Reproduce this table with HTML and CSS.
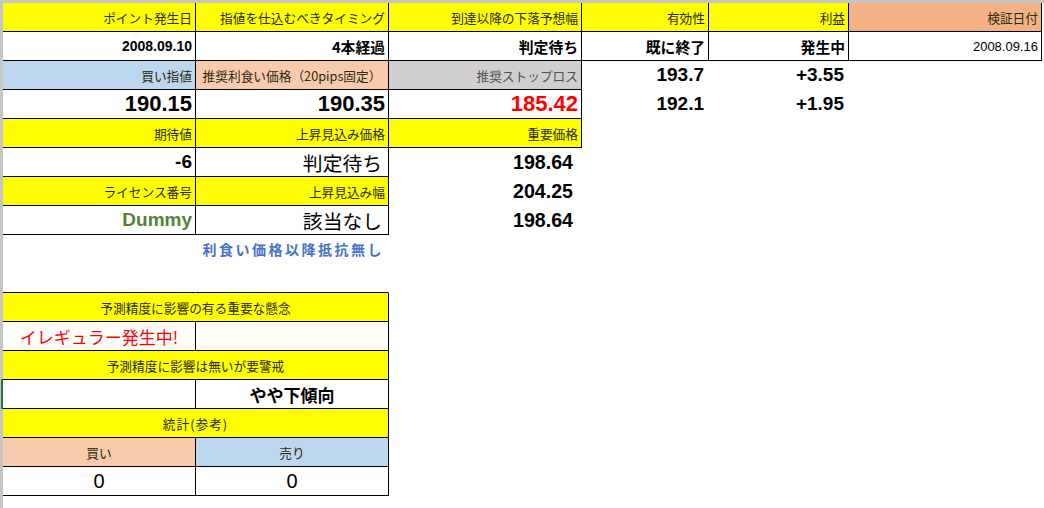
FILE: index.html
```html
<!DOCTYPE html>
<html lang="ja">
<head>
<meta charset="utf-8">
<link rel="stylesheet" href="styles.css">
</head>
<body>
<div class="sheet">
  <div class="row">
    <div class="c b y hd">ポイント発生日</div>
    <div class="c b y hd">指値を仕込むべきタイミング</div>
    <div class="c b y hd">到達以降の下落予想幅</div>
    <div class="c b y hd">有効性</div>
    <div class="c b y hd">利益</div>
    <div class="c b s hd">検証日付</div>
  </div>
  <div class="row">
    <div class="c b num14">2008.09.10</div>
    <div class="c b bj">4本経過</div>
    <div class="c b bj">判定待ち</div>
    <div class="c b bj">既に終了</div>
    <div class="c b bj">発生中</div>
    <div class="c b date">2008.09.16</div>
  </div>
  <div class="row">
    <div class="c b blue hd">買い指値</div>
    <div class="c b peach hd mid">推奨利食い価格（20pips固定）</div>
    <div class="c b gray hd gtext">推奨ストップロス</div>
    <div class="c num19 pr">193.7</div>
    <div class="c num19 pr">+3.55</div>
  </div>
  <div class="row">
    <div class="c b num22">190.15</div>
    <div class="c b num22">190.35</div>
    <div class="c b num22 red">185.42</div>
    <div class="c num19 pr">192.1</div>
    <div class="c num19 pr">+1.95</div>
  </div>
  <div class="row">
    <div class="c b y hd">期待値</div>
    <div class="c b y hd">上昇見込み価格</div>
    <div class="c b y hd">重要価格</div>
  </div>
  <div class="row">
    <div class="c b num19">-6</div>
    <div class="c b big">判定待ち</div>
    <div class="c num20 pr8">198.64</div>
  </div>
  <div class="row">
    <div class="c b y hd">ライセンス番号</div>
    <div class="c b y hd">上昇見込み幅</div>
    <div class="c num20 pr8">204.25</div>
  </div>
  <div class="row">
    <div class="c b num19 green">Dummy</div>
    <div class="c b big">該当なし</div>
    <div class="c num20 pr8">198.64</div>
  </div>
  <div class="row">
    <div class="c"></div>
    <div class="c note">利食い価格以降抵抗無し</div>
  </div>
  <div class="row">
    <div class="c bb"></div>
    <div class="c bb"></div>
  </div>
  <div class="row">
    <div class="c b y hd mid span2">予測精度に影響の有る重要な懸念</div>
  </div>
  <div class="row">
    <div class="c b mid alert">イレギュラー発生中!</div>
    <div class="c b"></div>
  </div>
  <div class="row">
    <div class="c b y hd mid span2">予測精度に影響は無いが要警戒</div>
  </div>
  <div class="row">
    <div class="c b sel"></div>
    <div class="c b mid trend">やや下傾向</div>
  </div>
  <div class="row">
    <div class="c b y hd mid span2 stat">統計(参考)</div>
  </div>
  <div class="row">
    <div class="c b peach hd mid">買い</div>
    <div class="c b blue hd mid">売り</div>
  </div>
  <div class="row">
    <div class="c b mid zero">0</div>
    <div class="c b mid zero">0</div>
  </div>
</div>
</body>
</html>
```

FILE: styles.css
```css
html, body {
  margin: 0;
  padding: 0;
  background: #ffffff;
}

body {
  width: 1044px;
  height: 508px;
  overflow: hidden;
  font-family: "Liberation Sans", "Noto Sans CJK JP", sans-serif;
  color: #000;
}

.sheet {
  border-top: 3px solid #c6c6c6;
  border-left: 3px solid #c6c6c6;
  height: 505px;
  box-sizing: content-box;
}

.row {
  display: grid;
  grid-template-columns: 193px 193px 193px 127px 140px 193px;
  height: 29px;
}

.c {
  box-sizing: border-box;
  height: 29px;
  display: flex;
  align-items: center;
  justify-content: flex-end;
  padding: 0 3px 0 3px;
  border-right: 1px solid transparent;
  border-bottom: 1px solid transparent;
  white-space: nowrap;
  overflow: visible;
}

.b {
  border-right-color: #000;
  border-bottom-color: #000;
}

.bb {
  border-bottom-color: #000;
}

.span2 {
  grid-column: 1 / span 2;
}

.mid {
  justify-content: center;
}

.pr {
  padding-right: 4px;
}

.pr8 {
  padding-right: 8px;
}

.y { background: #ffff00; }
.s { background: #f4b183; }
.blue { background: #bdd7ee; }
.peach { background: #f8cbad; }
.gray { background: #d0cece; }

.hd {
  font-family: "Noto Sans CJK JP", sans-serif;
  font-size: 12.7px;
  color: #2a2a10;
}

.gtext {
  color: #505050;
}

.stat {
  letter-spacing: 1px;
}

.num14 {
  font-weight: bold;
  font-size: 14px;
}

.bj {
  font-family: "Noto Sans CJK JP", sans-serif;
  font-weight: bold;
  font-size: 14.8px;
}

.date {
  font-size: 13px;
}

.num19 {
  font-weight: bold;
  font-size: 19px;
}

.num20 {
  font-weight: bold;
  font-size: 19.6px;
}

.num22 {
  font-weight: bold;
  font-size: 22px;
}

.red { color: #ff0000; }
.green { color: #548235; }

.big {
  font-family: "Noto Sans CJK JP", sans-serif;
  font-size: 19.8px;
  padding-right: 6px;
}

.note {
  font-family: "Noto Sans CJK JP", sans-serif;
  font-weight: bold;
  font-size: 14px;
  letter-spacing: 2.5px;
  color: #4472c4;
  padding-right: 4px;
}

.alert {
  font-family: "Noto Sans CJK JP", sans-serif;
  font-size: 17px;
  color: #ff0000;
}

.trend {
  font-family: "Noto Sans CJK JP", sans-serif;
  font-size: 17px;
  font-weight: bold;
}

.zero {
  font-size: 20px;
}

.sel {
  position: relative;
}

.sel::before {
  content: "";
  position: absolute;
  left: -2px;
  top: -1px;
  width: 2px;
  height: 30px;
  background: #217346;
}
```
